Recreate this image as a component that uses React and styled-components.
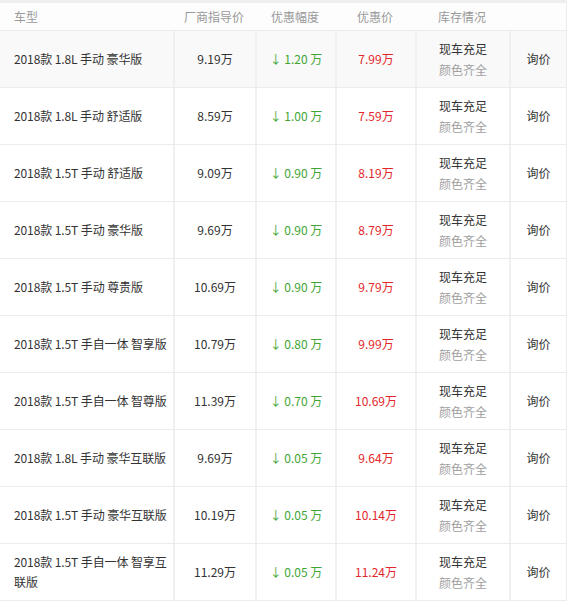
import React from "react";
import styled, { createGlobalStyle } from "styled-components";

const Global = createGlobalStyle`
  html, body { margin: 0; padding: 0; background: #fff; }
  body { font-family: "Noto Sans CJK SC", "Noto Sans", sans-serif; font-size: 12px; color: #333; }
`;

const COLS = "173px 82px 80px 80px 94px 57px";

const Table = styled.div`
  width: 567px;
  border-top: 3px solid #efefef;
`;

const HeaderRow = styled.div`
  display: grid;
  grid-template-columns: ${COLS};
  height: 27px;
  background: #fdfdfd;
  border-bottom: 1px solid #ececec;
  border-right: 1px solid #ececec;
`;

const HeadCell = styled.div`
  display: flex;
  align-items: center;
  justify-content: ${(p) => (p.$left ? "flex-start" : "center")};
  padding-left: ${(p) => (p.$left ? "14px" : "0")};
  color: #999;
  font-size: 12px;
`;

const Row = styled.div`
  display: grid;
  grid-template-columns: ${COLS};
  height: 56px;
  background: ${(p) => (p.$hover ? "#f9f9f9" : "#fff")};
  border-bottom: 1px solid #ececec;
  border-right: 1px solid #ececec;
`;

const Cell = styled.div`
  display: flex;
  flex-direction: column;
  justify-content: center;
  align-items: ${(p) => (p.$left ? "flex-start" : "center")};
  text-align: ${(p) => (p.$left ? "left" : "center")};
  padding: ${(p) => (p.$left ? "0 0 0 14px" : "0")};
  border-left: ${(p) => (p.$left ? "none" : "2px solid #f0f0f0")};
  line-height: 20px;
  color: #333;
  letter-spacing: ${(p) => (p.$left ? "-0.1px" : "0")};
`;

const Cut = styled.span`
  color: #3fa535;
`;

const Price = styled.span`
  color: #e3262b;
`;

const Stock = styled.span`
  line-height: 21px;
  color: ${(p) => (p.$sub ? "#a0a0a0" : "#333")};
`;

const data = [
  ["2018款 1.8L 手动 豪华版", "9.19万", "1.20", "7.99万"],
  ["2018款 1.8L 手动 舒适版", "8.59万", "1.00", "7.59万"],
  ["2018款 1.5T 手动 舒适版", "9.09万", "0.90", "8.19万"],
  ["2018款 1.5T 手动 豪华版", "9.69万", "0.90", "8.79万"],
  ["2018款 1.5T 手动 尊贵版", "10.69万", "0.90", "9.79万"],
  ["2018款 1.5T 手自一体 智享版", "10.79万", "0.80", "9.99万"],
  ["2018款 1.5T 手自一体 智尊版", "11.39万", "0.70", "10.69万"],
  ["2018款 1.8L 手动 豪华互联版", "9.69万", "0.05", "9.64万"],
  ["2018款 1.5T 手动 豪华互联版", "10.19万", "0.05", "10.14万"],
  ["2018款 1.5T 手自一体 智享互联版", "11.29万", "0.05", "11.24万"],
];

export default function App() {
  return (
    <>
      <Global />
      <Table>
        <HeaderRow>
          <HeadCell $left>车型</HeadCell>
          <HeadCell>厂商指导价</HeadCell>
          <HeadCell>优惠幅度</HeadCell>
          <HeadCell>优惠价</HeadCell>
          <HeadCell>库存情况</HeadCell>
          <HeadCell />
        </HeaderRow>
        {data.map(([name, guide, cut, price], i) => (
          <Row key={i} $hover={i === 0}>
            <Cell $left>{name}</Cell>
            <Cell>{guide}</Cell>
            <Cell>
              <Cut>↓ {cut} 万</Cut>
            </Cell>
            <Cell>
              <Price>{price}</Price>
            </Cell>
            <Cell>
              <Stock>现车充足</Stock>
              <Stock $sub>颜色齐全</Stock>
            </Cell>
            <Cell>询价</Cell>
          </Row>
        ))}
      </Table>
    </>
  );
}
